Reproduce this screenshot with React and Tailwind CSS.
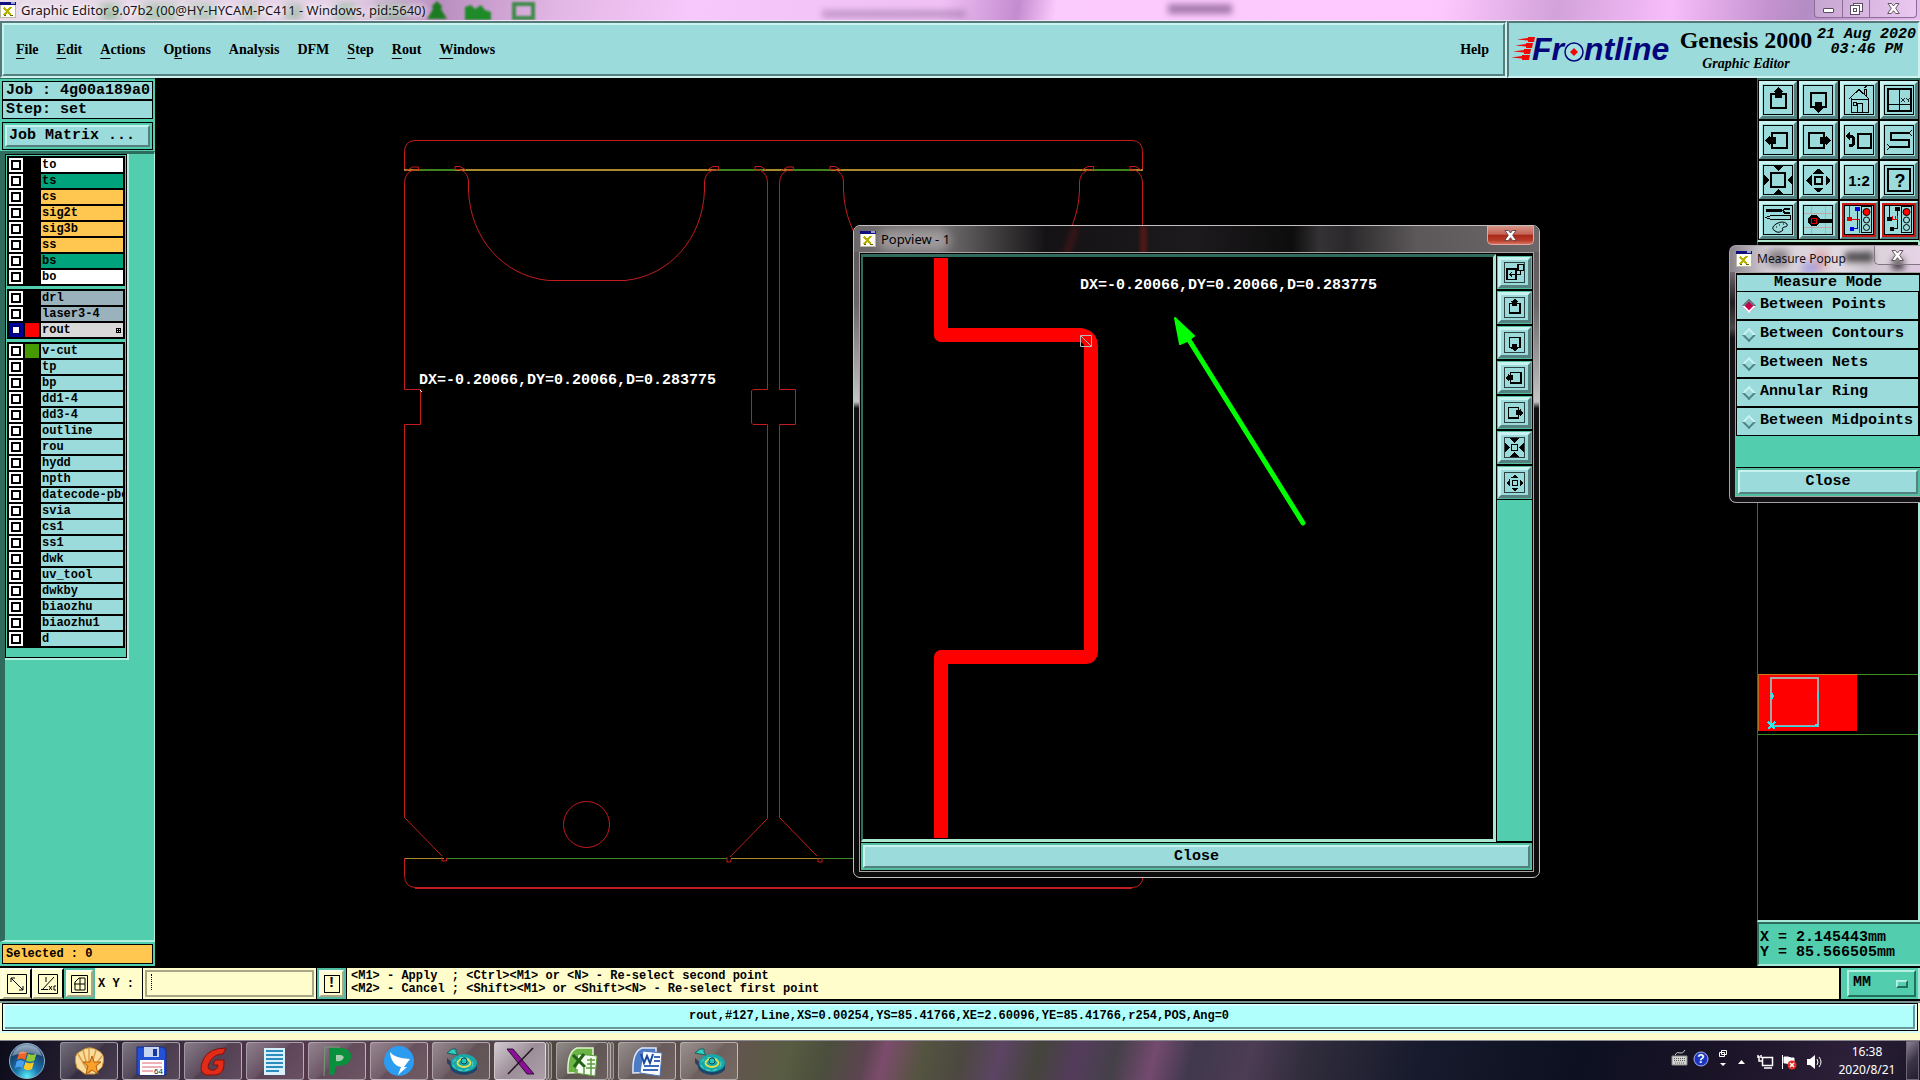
import React from "react";

const MONO = "font-['Liberation_Mono',monospace] font-bold";
const SERIF = "font-['Liberation_Serif',serif] font-bold";
const UI = "font-['Noto_Sans',sans-serif]";
const RAISED =
  "border-t-[#c9f3f1] border-l-[#c9f3f1] border-r-[#548080] border-b-[#548080]";
const SUNKEN =
  "border-t-[#557878] border-l-[#557878] border-r-[#cdf2f0] border-b-[#cdf2f0]";

/* ---------- title bar ---------- */

function AppIcon() {
  return (
    <svg width="16" height="16" viewBox="0 0 16 16" shapeRendering="crispEdges" className="shrink-0">
      <rect width="16" height="16" fill="#b8b8b0" />
      <rect x="1" y="1" width="14" height="14" fill="#fffff4" />
      <rect width="16" height="3" fill="#10107c" />
      <rect x="11" width="4" height="2" fill="#9aa0d8" />
      <path d="M4 6L11 13M11 5L4 13" stroke="#b8b000" strokeWidth="2" />
      <path d="M4 13H6M10 13H13" stroke="#606000" />
    </svg>
  );
}

const BLURS = [
  "left-[100px] w-5 bg-[#2c8c3c]/50",
  "left-[142px] w-9 bg-[#2c8c3c]/45",
  "left-[188px] w-7 bg-[#3c9c4c]/40",
  "left-[242px] w-4 bg-[#2c8c3c]/40",
  "left-[285px] w-4 bg-[#2c8c3c]/40",
  "left-[335px] w-5 bg-[#2c8c3c]/50",
  "left-[376px] w-8 bg-[#3c9c4c]/45",
];

function TitleBar() {
  return (
    <header className="relative flex h-[21px] shrink-0 items-center overflow-hidden border-b border-[#f4e4f6] bg-[linear-gradient(100deg,#e9dcea_0%,#e6d2e8_18%,#b98fc0_23%,#e2b6e4_29%,#f6c8fb_36%,#f0c0f4_49%,#c48cd0_53%,#fccbfd_55%,#fdc8fe_75%,#d3a2da_81%,#f7bdfb_87%,#c493cf_92%,#b48cc4_94%,#e8bdf0_100%)]">
      {BLURS.map((b) => (
        <span key={b} className={"absolute top-[5px] h-3.5 blur-[4px] " + b} />
      ))}
      <svg className="absolute left-[424px] top-0 blur-[1px]" width="116" height="21" viewBox="0 0 116 21">
        <path d="M13 1L18 6L17 9L23 19H3L9 9L8 6Z" fill="#1c7a20" />
        <path d="M41 20V7L47 5L51 9L57 5L61 10L67 12V20Z" fill="#1f8a28" />
        <path d="M90 4H109V18H90Z" fill="none" stroke="#3d8a48" strokeWidth="4" />
      </svg>
      <span className="absolute left-[822px] top-[10px] h-2 w-36 bg-[#8a6496]/45 blur-[3px]" />
      <span className="absolute left-[1168px] top-[4px] h-2.5 w-16 bg-[#6c4478]/60 blur-[3px]" />
      <div className="relative flex items-center gap-[5px]">
        <AppIcon />
        <h1 className={UI + " text-[13px] leading-none text-[#1c141c] [text-shadow:0_0_6px_#fff,0_0_6px_#fff]"}>
          Graphic Editor 9.07b2 (00@HY-HYCAM-PC411 - Windows, pid:5640)
        </h1>
      </div>
      <div className="absolute right-[3px] top-0 flex h-[18px] overflow-hidden rounded-b border border-t-0 border-[#8d6c96] bg-white/20">
        <button aria-label="Minimize" className="grid w-7 place-items-center border-r border-[#8d6c96]">
          <span className="mt-1 h-[5px] w-[11px] rounded-[1px] border border-[#5c4c64] bg-white" />
        </button>
        <button aria-label="Restore" className="grid w-[27px] place-items-center border-r border-[#8d6c96]">
          <svg width="13" height="12" viewBox="0 0 13 12" fill="#fff" stroke="#5c4c64">
            <rect x="3.5" y=".5" width="9" height="8" />
            <rect x=".5" y="2.5" width="9" height="9" />
            <rect x="3.5" y="5.5" width="3" height="3" />
          </svg>
        </button>
        <button aria-label="Close" className="grid w-[46px] place-items-center">
          <CloseX />
        </button>
      </div>
    </header>
  );
}

function CloseX() {
  return (
    <svg width="13" height="11" viewBox="0 0 13 11">
      <path d="M1 .5H4.5L6.5 3L8.5.5H12L8.7 5.2L12.300 10.500H8.700L6.500 7.700L4.300 10.500H.7L4.300 5.200Z" fill="#fff" stroke="#55454f" strokeWidth=".9" />
    </svg>
  );
}

/* ---------- menu ---------- */

const MENU = [
  ["", "F", "ile"],
  ["", "E", "dit"],
  ["", "A", "ctions"],
  ["O", "p", "tions"],
  ["Analysis", "", ""],
  ["DFM", "", ""],
  ["", "S", "tep"],
  ["", "R", "out"],
  ["", "W", "indows"],
];

function Logo() {
  return (
    <svg width="164" height="48" viewBox="0 -8 164 48" role="img" aria-label="Frontline" className="shrink-0">
      <g fill="#f00808">
        <path d="M6 5.500L17 4V3H24L23 8H17V6.500Z" />
        <path d="M4 11.500L15 10V9H22L21 14H15V12.500Z" />
        <path d="M2 17.500L13 16V15H20L19 20H13V18.500Z" />
        <path d="M0 23.500L11 22V21H19L18 26H11V24.500Z" />
      </g>
      <g fill="#06067c" className="font-['Liberation_Sans',sans-serif] text-[32px] font-bold italic">
        <text x="21" y="26">Fr</text>
        <text x="73" y="26">ntline</text>
      </g>
      <circle cx="63" cy="18" r="9" fill="#a4e2e2" stroke="#06067c" strokeWidth="1.500" />
      <path d="M63 14L67 18L63 22L59 18Z" fill="#f00808" />
    </svg>
  );
}

function MenuBar() {
  return (
    <div className="flex h-[57px] shrink-0 bg-[#9bdbdb]">
      <div className={"flex flex-1 border-2 " + SUNKEN}>
        <nav className={SERIF + " flex flex-1 items-center gap-[18px] border-2 pl-3 pr-3.5 text-[14px] " + RAISED}>
          {MENU.map(([a, u, b]) => (
            <button key={a + u + b}>
              {a}
              {u && <span className="underline underline-offset-4">{u}</span>}
              {b}
            </button>
          ))}
          <button className="ml-auto">Help</button>
        </nav>
      </div>
      <div className={"flex w-[413px] items-center border-2 pl-0.5 " + SUNKEN}>
        <Logo />
        <div className={SERIF + " flex flex-1 flex-col items-center"}>
          <span className="text-[24px] leading-7">Genesis 2000</span>
          <span className="text-[14px] italic leading-5">Graphic Editor</span>
        </div>
        <div className={MONO + " self-start pr-0.5 pt-1 text-center text-[15px] italic leading-[15px]"}>
          <div>21 Aug 2020</div>
          <div>03:46 PM</div>
        </div>
      </div>
    </div>
  );
}

/* ---------- layer list ---------- */

const W = "bg-white";
const G = "bg-[#00a47c]";
const O = "bg-[#ffc650]";
const S = "bg-[#9ab2bc]";
const C = "bg-[#9bdbdb]";
const GROUPS = [
  [["to", W], ["ts", G], ["cs", O], ["sig2t", O], ["sig3b", O], ["ss", O], ["bs", G], ["bo", W]],
  [["drl", S], ["laser3-4", S], ["rout", "bg-[#d9d9d9]", "bg-[#ff0000]"]],
  [
    ["v-cut", C, "bg-[#459a00]"], ["tp", C], ["bp", C], ["dd1-4", C], ["dd3-4", C], ["outline", C],
    ["rou", C], ["hydd", C], ["npth", C], ["datecode-pbo", C], ["svia", C], ["cs1", C], ["ss1", C],
    ["dwk", C], ["uv_tool", C], ["dwkby", C], ["biaozhu", C], ["biaozhu1", C], ["d", C],
  ],
];

function LayerRow({ name, bg, swatch }) {
  const active = name === "rout";
  return (
    <label className="flex h-3.5 gap-0.5">
      <input
        type="checkbox"
        className={
          "size-3.5 shrink-0 appearance-none border-2 bg-white " +
          (active
            ? "border-[#00009c] shadow-[inset_0_0_0_2px_#000080]"
            : "border-white shadow-[inset_0_0_0_2px_#000]")
        }
      />
      <span className={"size-3.5 shrink-0 " + (swatch || "bg-black")} />
      <span className={"flex min-w-0 flex-1 items-center overflow-hidden whitespace-nowrap pl-px text-[12px] leading-[14px] " + bg}>
        {name}
        {active && (
          <svg className="ml-auto mr-0.5" width="5" height="5" viewBox="0 0 5 5" shapeRendering="crispEdges">
            <path d="M.5.5H4.500V4.500H.5ZM2.500 0V5M0 2.500H5" fill="none" stroke="#000" />
          </svg>
        )}
      </span>
    </label>
  );
}

function LeftPanel() {
  return (
    <aside className={MONO + " flex w-[155px] shrink-0 flex-col bg-[#52ceae] text-black"}>
      <div className="border-t border-[#2c6c5c] px-0.5 pt-0.5 text-[15px]">
        <div className="border border-black bg-[#9bdbdb] pl-[3px] leading-[17px]">Job : 4g00a189a0</div>
        <div className="border border-black bg-[#9bdbdb] pl-[3px] leading-[17px]">Step: set</div>
        <div className="mt-[3px] border border-black p-0.5">
          <button className={"block w-full border-2 bg-[#9bdbdb] pl-0.5 text-left leading-[18px] " + RAISED}>
            Job Matrix ...
          </button>
        </div>
      </div>
      <div className="mt-px flex flex-1 flex-col items-start border-b-2 border-l-[5px] border-r border-t-[3px] border-b-[#b4f0e0] border-l-[#2f6c5e] border-r-[#b4f0e0] border-t-[#2f6c5e]">
        <div className="w-[124px] border-b-2 border-r-2 border-[#b4f0e0]">
          <div className="flex flex-col gap-[3px] border border-black px-px pb-[9px] pt-px">
            {GROUPS.map((rows, i) => (
              <div key={i} className="flex flex-col gap-0.5 bg-black p-0.5">
                {rows.map(([name, bg, swatch]) => (
                  <LayerRow key={name} name={name} bg={bg} swatch={swatch} />
                ))}
              </div>
            ))}
          </div>
        </div>
      </div>
      <div className="px-0.5 pb-0.5 pt-0.5">
        <div className="border border-black bg-[#ffc650] pl-[3px] text-[12px] leading-[18px]">Selected : 0</div>
      </div>
    </aside>
  );
}

/* ---------- toolbar glyphs, drawn on a 30 x 30 grid ---------- */

const GLYPHS = {
  up: (
    <>
      <rect x="8" y="9" width="15" height="14" fill="none" strokeWidth="2" />
      <path d="M15.500 2L21 7H19V13H12V7H10Z" stroke="none" />
    </>
  ),
  down: (
    <>
      <rect x="8" y="8" width="15" height="14" fill="none" strokeWidth="2" />
      <path d="M15.500 28L21 23H19V17H12V23H10Z" stroke="none" />
    </>
  ),
  left: (
    <>
      <rect x="9" y="8" width="15" height="15" fill="none" strokeWidth="2" />
      <path d="M2 15.500L7 10V12H13V19H7V21Z" stroke="none" />
    </>
  ),
  right: (
    <>
      <rect x="6" y="8" width="15" height="15" fill="none" strokeWidth="2" />
      <path d="M28 15.500L23 10V12H17V19H23V21Z" stroke="none" />
    </>
  ),
  home: (
    <path d="M5 14L15 4.500L25 14M7 13V27H24V13M7 14H24M13.500 27V18H18.500V27M20 9V4.500H22V11M9 17H12V20H9ZM20 3L23 1" fill="none" />
  ),
  grid: (
    <>
      <rect x="4" y="4" width="23" height="22" fill="none" strokeWidth="2" />
      <path d="M15.500 4V26M4 19.500H27" fill="none" />
      <path d="M17 13L21 17M21 13L17 17M22 13L24 15L26 13M24 15V17" fill="none" strokeWidth=".8" />
    </>
  ),
  undo: (
    <>
      <rect x="14" y="9" width="13" height="14" fill="none" strokeWidth="2" />
      <path d="M6 11H8Q10 13 10 16Q10 21 5 21" fill="none" strokeWidth="3" />
      <path d="M1 11L6 7V15Z" stroke="none" />
    </>
  ),
  snake: (
    <>
      <path d="M25 8H7V15H25V22H6" fill="none" strokeWidth="2" />
      <path d="M25 8L28 5M25 8L28 11M6 22L3 19M6 22L3 25" fill="none" />
    </>
  ),
  out: (
    <>
      <rect x="8" y="8" width="14" height="14" fill="none" strokeWidth="2" />
      <path d="M10 1H20L15 6ZM10 29H20L15 24ZM1 10V20L6 15ZM29 10V20L24 15Z" stroke="none" />
    </>
  ),
  outSmall: (
    <>
      <rect x="11" y="11" width="8" height="8" fill="none" strokeWidth="2" />
      <path d="M8 1H22L15 9ZM8 29H22L15 21ZM1 8V22L9 15ZM29 8V22L21 15Z" stroke="none" />
    </>
  ),
  in: (
    <>
      <rect x="12" y="12" width="7" height="7" fill="none" strokeWidth="2" />
      <path d="M10 8.500H21L15.500 3.500ZM10 22.500H21L15.500 27.500ZM8.500 10V21L3.500 15.500ZM22.500 10V21L27.500 15.500Z" stroke="none" />
    </>
  ),
  ratio: (
    <text x="15" y="21" textAnchor="middle" stroke="none" className="font-['Liberation_Sans',sans-serif] text-[15px] font-bold">
      1:2
    </text>
  ),
  help: (
    <>
      <rect x="4" y="4" width="22" height="22" fill="none" strokeWidth="2" />
      <text x="16" y="22" textAnchor="middle" stroke="none" className="font-['Liberation_Sans',sans-serif] text-[18px] font-bold">
        ?
      </text>
    </>
  ),
  tools: (
    <>
      <path d="M3 5.500H19" strokeWidth="3" />
      <path d="M27 3.500H22L20 5.500L22 8H27" fill="none" strokeWidth="2" />
      <path d="M3 12.500L8 10.500H27V14.500H8Z" fill="none" />
      <path d="M12 26Q7 23 13 19Q20 15 24 19Q25 22 21 22Q18 23 20 25Q16 29 12 26ZM13 22H14M16 20H17M20 19H21" fill="none" shapeRendering="auto" />
    </>
  ),
  probe: (
    <>
      <path d="M8.500 1V29M22.500 1V29M1 8.500H29M1 22.500H29" stroke="#c2a9a4" fill="none" />
      <circle cx="11" cy="15.500" r="6" stroke="none" />
      <path d="M15 15.500H29" strokeWidth="4" />
      <path d="M8.500 13H13.500V18H8.500ZM10.500 15.500H11.500" fill="none" stroke="#e00000" />
    </>
  ),
  netOn: (
    <>
      <path d="M5.500 1V14M5.500 14H15.500V28" stroke="#e00000" fill="none" />
      <path d="M13.500 4V23H8" stroke="#0000e0" fill="none" />
      <circle cx="13.500" cy="4" r="2.500" fill="#0000e0" stroke="none" />
      <circle cx="5.500" cy="14" r="2.500" fill="#e00000" stroke="none" />
      <circle cx="8" cy="24" r="2.500" fill="#0000e0" stroke="none" />
    </>
  ),
  netOff: (
    <>
      <path d="M5.500 1V14M13.500 4V23H8" fill="none" />
      <path d="M7 14H14M8.500 11V14M11 11V14M13.500 11V14" stroke="#e00000" fill="none" />
      <circle cx="13.500" cy="4" r="2.500" stroke="none" />
      <circle cx="5.500" cy="14" r="2.500" stroke="none" />
      <circle cx="8" cy="24" r="2.500" stroke="none" />
    </>
  ),
  copyView: (
    <>
      <rect x="4" y="10" width="13" height="15" fill="none" strokeWidth="2" />
      <rect x="20" y="3" width="8" height="9" fill="none" strokeWidth="1.500" />
      <path d="M8 17.500H24V12M8 17.500L11 14.500M8 17.500L11 20.500" fill="none" strokeWidth="1.500" />
    </>
  ),
};

function Glyph({ name, className }) {
  return (
    <svg viewBox="0 0 30 30" className={className} fill="#000" stroke="#000" shapeRendering="crispEdges">
      {GLYPHS[name]}
      {name.startsWith("net") && (
        <g shapeRendering="auto" fill="none">
          <rect x="17.500" y="1.500" width="10" height="26" />
          <circle cx="22.500" cy="7" r="3.500" fill="#ff0000" />
          <circle cx="22.500" cy="15" r="3" />
          <circle cx="22.500" cy="22.500" r="3" />
        </g>
      )}
      <rect x=".5" y=".5" width="29" height="29" fill="none" />
    </svg>
  );
}

const TOOLS = [
  "up", "down", "home", "grid",
  "left", "right", "undo", "snake",
  "out", "in", "ratio", "help",
  "tools", "probe", "netOn", "netOff",
];

function Overview() {
  return (
    <div className="flex-1 border-b-2 border-l border-r-2 border-b-[#a8e8d8] border-l-[#2f6c5e] border-r-[#a8e8d8] bg-black pt-[432px]">
      <svg className="block w-full" height="63" shapeRendering="crispEdges">
        <rect x="0" y="1" width="99" height="56" fill="#f00" />
        <path d="M0 .5H99" stroke="#c87818" />
        <path d="M99 .5H200M0 60.500H200" stroke="#3e8a1c" />
        <path d="M.5 0V57" stroke="#b07020" />
        <rect x="13" y="4" width="47" height="48" fill="none" stroke="#a8a8a8" strokeWidth="2" />
        <path d="M13 4V52H59M60 18V26" fill="none" stroke="#20dce8" />
        <path d="M10 48L17 55M17 48L10 55M13 19L15 22L13 25M57 51H60" fill="none" stroke="#20f0f8" strokeWidth="2" />
      </svg>
    </div>
  );
}

function RightPanel() {
  return (
    <aside className="flex w-[163px] shrink-0 flex-col">
      <div className="border-b-2 border-l border-r border-t-2 border-b-[#a8e8c8] border-l-[#2f6c5e] border-r-[#2f6c5e] border-t-[#2f6c5e] bg-black">
        <div className="grid grid-cols-4 gap-0.5 p-px">
          {TOOLS.map((t) => (
            <button
              key={t}
              aria-label={t}
              className={"grid h-[38px] place-items-center border-[3px] bg-[#9bdbdb] " + RAISED}
            >
              <Glyph
                name={t}
                className={"size-[30px] " + (t.startsWith("net") ? "outline-2 outline-[#c81818]" : "")}
              />
            </button>
          ))}
        </div>
      </div>
      <Overview />
      <div className={MONO + " border-b-2 border-l-2 border-t-2 border-b-[#a8e8d8] border-l-[#2f6c5e] border-t-[#2f6c5e] bg-[#52ceae] pb-1 pl-px pt-1.5 text-[15px] leading-[15px]"}>
        <div>X = 2.145443mm</div>
        <div>Y = 85.566505mm</div>
      </div>
    </aside>
  );
}

/* ---------- board drawing ---------- */

function Board() {
  return (
    <svg className="block h-full w-full" aria-label="Board outline">
      <g transform="translate(-155 -78)" fill="none" stroke="#c41c1c">
        <path d="M404.500 169V152Q404.500 140.500 416 140.500H1132Q1142.500 140.500 1142.500 152V169" />
        <path d="M404 170H1143" stroke="#a88a28" strokeWidth="2" />
        <path d="M419 170H455M716 170H763M793 170H831M1094 170H1130" stroke="#3f8420" strokeWidth="2" />
        <defs>
          <path
            id="card"
            d="M418.500 170V167H412.500L406 171M418.500 170H413Q404.500 173 404.500 184V389.500H420.500V424.500H404.500V817.500L442 856M455 166.500H460L466 170M455 166.500V169.500H460Q468.500 173 468.500 182V190C470 238 503 276 548.500 280.500H625C670 276 703 238 704.500 190V182Q705 173 713 170H718.500V166.500H713L707 170M755 170V166.500H761L766 170M755 170H760Q767.500 174 767.500 183V389.500H753L751.500 391V423L753 424.500H767.500V818.500L730 857"
          />
        </defs>
        <use href="#card" />
        <use href="#card" x="375" />
        <circle cx="586.500" cy="824.500" r="23" />
        <path d="M404 858.500H444M731 858.500H820" stroke="#a88a28" />
        <path d="M446 858.500H727M820 858.500H860" stroke="#3f8420" />
        <path d="M442 857V861H446.500V858M727 857V862H731V859M818 858V862H822V858" />
        <path d="M404.500 858V875Q404.500 887.500 416 887.500H1132Q1142.500 887.500 1143 876" />
        <path d="M415 888H1132" strokeWidth="2" />
        <text x="419" y="384" fill="#fff" stroke="none" className={MONO + " text-[15px]"}>
          DX=-0.20066,DY=0.20066,D=0.283775
        </text>
        <path d="M420 390L422 392" stroke="#fff" />
      </g>
    </svg>
  );
}

/* ---------- popview window ---------- */

function Popview() {
  return (
    <section className="absolute left-[698px] top-[147px] flex h-[653px] w-[687px] flex-col rounded-[7px] border border-[#c4c0c2] bg-[linear-gradient(180deg,#5a5557_0%,#6a6668_12%,#c4c4c4_27%,#101010_28%,#0c0c0c_100%)] px-[5px] pb-[5px]">
      <div className="relative -mx-[5px] flex h-[26px] shrink-0 items-center gap-[5px] overflow-hidden rounded-t-[6px] bg-[linear-gradient(90deg,#6c686a_0%,#787476_12%,#454244_20%,#141214_28%,#1c1a1c_50%,#0e0d0e_64%,#343234_68%,#2a282a_72%,#5c585a_82%,#6c686a_100%)] pl-1.5">
        <span className="absolute left-[214px] top-0 h-8 w-[5px] rotate-[20deg] bg-[#981818]/40 blur-[3px]" />
        <span className="absolute left-[287px] top-0 h-7 w-[5px] bg-[#981818]/60 blur-[2px]" />
        <span className="absolute left-6 top-1 h-5 w-[72px] rounded-full bg-[#b0acae]/70 blur-[5px]" />
        <AppIcon />
        <h2 className={UI + " relative text-[13px] leading-none text-black"}>Popview - 1</h2>
        <button
          aria-label="Close window"
          className="absolute right-[5px] top-0 grid h-[19px] w-[47px] place-items-center rounded-b-[5px] border border-t-0 border-[#e0a8a0] bg-[linear-gradient(180deg,#d89488_0%,#c46456_45%,#a82818_52%,#b83c28_80%,#d87060_100%)]"
        >
          <CloseX />
        </button>
      </div>
      <div className="flex min-h-0 flex-1 flex-col border border-[#a8a4a6] bg-black p-px">
        <div className="flex min-h-0 flex-1">
          <div className="min-w-0 flex-1 border-b-[3px] border-l-2 border-r-[3px] border-t-[3px] border-b-[#a8e8d0] border-l-[#2f6c5e] border-r-[#a8e8d0] border-t-[#2f6c5e] bg-black">
            <svg className="block h-full w-full" aria-label="Magnified view">
              <g transform="translate(-863 -257)">
                <path d="M941 258V335H1081Q1091 337 1091 347V651Q1091 657 1085 657H941V838" fill="none" stroke="#f00" strokeWidth="14" strokeLinejoin="round" />
                <path d="M1080.500 335.500H1091.500V346.500H1080.500ZM1081 336L1091 346" fill="none" stroke="#b8b8b8" />
                <path d="M1189 340L1303 523" stroke="#0f0" strokeWidth="5" strokeLinecap="round" />
                <path d="M1175 318L1194 336L1187 341L1180 344Z" fill="#0f0" stroke="#0f0" strokeWidth="2" strokeLinejoin="round" />
                <text x="1080" y="289" fill="#fff" className={MONO + " text-[15px]"}>
                  DX=-0.20066,DY=0.20066,D=0.283775
                </text>
              </g>
            </svg>
          </div>
          <div className="ml-px flex w-[35px] flex-col gap-0.5 pb-px pt-0.5">
            {["copyView", "up", "down", "left", "right", "outSmall", "in"].map((t) => (
              <div key={t} className="bg-[#52bea0] p-px">
                <button
                  aria-label={"Popview " + t}
                  className={"grid h-[31px] w-full place-items-center border-[3px] bg-[#9bdbdb] " + RAISED}
                >
                  <Glyph name={t} className="size-[21px]" />
                </button>
              </div>
            ))}
            <div className="-mt-px flex-1 bg-[#52ceae]" />
          </div>
        </div>
        <div className="mt-px bg-[#52bea0] p-0.5">
          <button className={MONO + " block w-full border-2 bg-[#9bdbdb] pt-px text-[15px] leading-[18px] " + RAISED}>
            Close
          </button>
        </div>
      </div>
    </section>
  );
}

/* ---------- measure window ---------- */

const MODES = ["Between Points", "Between Contours", "Between Nets", "Annular Ring", "Between Midpoints"];

function MeasurePopup() {
  return (
    <section className="absolute right-0 top-[167px] flex w-[191px] flex-col rounded-tl-[7px] rounded-bl-[7px] border border-r-0 border-[#a8a4a6] bg-[linear-gradient(180deg,#b4a8b4_0%,#201c20_22%,#4a464a_32%,#141214_36%,#141214_100%)] pb-[5px] pl-[5px]">
      <div className="relative -ml-[5px] flex h-[26px] items-center gap-[5px] overflow-hidden rounded-tl-[6px] bg-[linear-gradient(90deg,#8c848c_0%,#d8d0d8_20%,#e2dae2_60%,#cfc7cf_72%,#e0c8e0_100%)] pl-[6px]">
        <span className="absolute left-[38px] top-1 h-4 w-5 bg-[#303030]/50 blur-[4px]" />
        <span className="absolute left-[85px] top-1 h-5 w-3 bg-[#e04040]/30 blur-[4px]" />
        <span className="absolute left-[72px] top-4 h-3 w-4 bg-[#4040e0]/35 blur-[4px]" />
        <span className="absolute left-[115px] top-1.5 h-2.5 w-7 bg-[#181818]/70 blur-[3px]" />
        <span className="absolute right-4 top-3 h-3 w-3 bg-[#181818]/75 blur-[3px]" />
        <AppIcon />
        <h2 className={UI + " relative text-[12px] leading-none text-[#141014]"}>Measure Popup</h2>
        <button aria-label="Close measure popup" className="absolute right-0 top-0 grid h-[19px] w-[46px] place-items-center rounded-bl-[5px] border border-r-0 border-t-0 border-[#807480] bg-white/20">
          <CloseX />
        </button>
      </div>
      <div className={MONO + " flex flex-col border border-r-0 border-[#a8a4a6] bg-black text-[15px]"}>
        <fieldset className="contents">
          <legend className="contents">
            <span className="mt-0.5 mr-px ml-px block bg-[#9bdbdb] text-center leading-4">Measure Mode</span>
          </legend>
          {MODES.map((m, i) => (
            <label key={m} className="ml-px mr-0.5 mt-px mb-px flex h-[27px] items-center gap-[6px] bg-[#9bdbdb] pl-[7px]">
              <input
                type="radio"
                name="mode"
                defaultChecked={i === 0}
                className="size-2.5 shrink-0 rotate-45 appearance-none border-2 border-b-[#4f8484] border-l-[#c9f3f1] border-r-[#4f8484] border-t-[#c9f3f1] checked:border-b-white checked:border-l-[#5c8080] checked:border-r-white checked:border-t-[#5c8080] checked:bg-[#c8004c]"
              />
              <span className="whitespace-nowrap">{m}</span>
            </label>
          ))}
        </fieldset>
        <div className="h-[31px] bg-[#52ceae]" />
        <div className="mt-px bg-[#52bea0] p-0.5">
          <button className={"block w-full border-2 bg-[#9bdbdb] leading-5 " + RAISED}>Close</button>
        </div>
      </div>
    </section>
  );
}

/* ---------- command and status bars ---------- */

function CommandBar() {
  const btn =
    "grid h-full place-items-center border-2 border-t-[#fffff0] border-l-[#fffff0] border-r-[#a8a888] border-b-[#a8a888] bg-[#fffdcc]";
  return (
    <div className={MONO + " flex h-[35px] shrink-0 border-y-2 border-black bg-[#fffdcc] text-[12px]"}>
      <button aria-label="Resize" className={btn + " ml-0.5 w-[30px] border-r-black"}>
        <svg width="20" height="20" fill="none" stroke="#000">
          <path d="M.5.5H19.500V19.500H.5ZM4 4L16 16M4 8V4H8M12 16H16V12" />
        </svg>
      </button>
      <button aria-label="Angle" className={btn + " w-8 border-r-black"}>
        <svg width="20" height="20" fill="none" stroke="#000">
          <path d="M.5.5H19.500V19.500H.5ZM4 16L16 3M3 15.500H10M8 3V8M11 12L14 16M14 12L11 16M18 12H16V16H18" />
        </svg>
      </button>
      <div className="w-[31px] bg-[#52bea0] p-0.5">
        <button aria-label="Grid" className={btn + " w-full"}>
          <svg width="17" height="18" fill="none" stroke="#000">
            <path d="M.5.5H16.500V17.500H.5ZM4 15V7L8 3H14V15ZM3 9H14M9 3V15" />
          </svg>
        </button>
      </div>
      <label htmlFor="xy" className="flex w-[47px] items-center whitespace-pre pl-[3px]">X Y :</label>
      <div className="relative w-[174px] border-l border-black p-0.5">
        <input
          id="xy"
          className="h-full w-full border-2 border-b-[#a8a888] border-l-[#a8a888] border-r-[#a8a888] border-t-[#a8a888] bg-[#fffdcc] px-1 outline-none"
        />
        <span className="pointer-events-none absolute left-2 top-1.5 h-4 border-l border-dotted border-black" />
      </div>
      <div className="w-[31px] border-x border-black bg-[#52bea0] p-0.5">
        <button aria-label="Alert" className={btn + " w-full"}>
          <span className="grid h-[18px] w-4 place-items-center border border-black text-[15px] leading-none">!</span>
        </button>
      </div>
      <pre className={MONO + " flex-1 pl-1 pt-0.5 leading-[13px]"}>
        {"<M1> - Apply  ; <Ctrl><M1> or <N> - Re-select second point\n<M2> - Cancel ; <Shift><M1> or <Shift><N> - Re-select first point"}
      </pre>
      <div className="flex w-[81px] border-l-2 border-r-2 border-l-black border-r-[#a8e8d8] bg-[#52ceae] py-0.5 pl-1.5 pr-0.5">
        <label className="relative flex flex-1 border-2 border-b-[#20705c] border-l-[#b4f0e0] border-r-[#20705c] border-t-[#b4f0e0]">
          <span className="sr-only">Units</span>
          <select className="w-full appearance-none bg-transparent pl-1 text-[15px] outline-none">
            <option>MM</option>
            <option>INCH</option>
          </select>
          <span className="pointer-events-none absolute right-1.5 top-2 h-2 w-3 border-2 border-b-[#20705c] border-l-[#b4f0e0] border-r-[#20705c] border-t-[#b4f0e0]" />
        </label>
      </div>
    </div>
  );
}

function StatusBar() {
  return (
    <div className="h-[39px] shrink-0 border-t-2 border-[#7c9494] bg-[#fffdcc]">
      <div className="border-b-2 border-[#d8fcfc] pl-0.5 pr-0.5">
        <div className="border border-black bg-[#d8fffd] px-0.5 pb-px">
          <output className={MONO + " block border-b-2 border-r-2 border-t-2 border-b-[#669898] border-r-[#669898] border-t-[#d8fffd] bg-[#b0fffc] text-center text-[12px] leading-[21px]"}>
            rout,#127,Line,XS=0.00254,YS=85.41766,XE=2.60096,YE=85.41766,r254,POS,Ang=0
          </output>
        </div>
      </div>
    </div>
  );
}

/* ---------- taskbar ---------- */

function StartOrb() {
  return (
    <svg width="38" height="38" viewBox="0 0 38 38">
      <defs>
        <radialGradient id="orb" cx=".5" cy=".95" r=".95">
          <stop offset="0" stopColor="#5cf0f8" />
          <stop offset=".35" stopColor="#1c78b0" />
          <stop offset=".75" stopColor="#17406c" />
          <stop offset="1" stopColor="#7c98b4" />
        </radialGradient>
      </defs>
      <circle cx="19" cy="19" r="17.500" fill="url(#orb)" stroke="#8cb4cc" />
      <path d="M11 11Q15 8 19 11L17 18Q13 15 9 18Z" fill="#f06428" />
      <path d="M20 11.500Q24 14 28.500 11.500L26.500 18.500Q22 21 18 18.500Z" fill="#90c83c" />
      <path d="M8.500 19.500Q12 16.500 16.500 19.500L14.500 26Q11 23.500 7 26Z" fill="#48a0f0" />
      <path d="M17.500 20Q22 22.500 26 20L24 27Q20 29.500 15.500 26.500Z" fill="#fcc828" />
      <path d="M4 14Q8 3 19 3Q30 3 34 14Q19 8 4 14Z" fill="#fff" opacity=".35" />
    </svg>
  );
}

const DISC = (
  <>
    <path d="M1 12L9 19L11 23L8 24L1 17Z" fill="#30405c" />
    <ellipse cx="18" cy="20" rx="14" ry="9" fill="#1c4468" />
    <ellipse cx="18" cy="17" rx="13" ry="9" fill="#18a8a8" />
    <ellipse cx="17" cy="18" rx="10" ry="6.500" fill="none" stroke="#60d8d0" strokeDasharray="4 3" />
    <ellipse cx="18" cy="17" rx="6.500" ry="4" fill="none" stroke="#e8e050" strokeWidth="1.800" />
    <ellipse cx="18" cy="15" rx="3" ry="3" fill="#20c8c0" stroke="#104858" />
    <path d="M1 7L6 3H10V6L12 9L6 8Z" fill="#30d0c0" stroke="#106060" />
  </>
);

const APPS = [
  ["Shell", (
    <>
      <path d="M3 22Q-2 8 7 5Q15 -1 23 4Q33 8 28 21L21 28H11Z" fill="#f8dc9c" stroke="#c88c30" />
      <path d="M15 27L4 8M15 27L9 4M15 27L15 2M15 27L22 4M15 27L28 10" stroke="#dca048" strokeWidth="1.500" fill="none" />
      <path d="M18 10L20 16L27 16L22 20L24 28L18 24L12 28L14 20L9 16L16 16Z" fill="#f8a028" stroke="#b85c10" />
    </>
  )],
  ["Save", (
    <>
      <path d="M1 1H27L30 4V29H1Z" fill="#2450d8" stroke="#102c8c" />
      <rect x="8" y="1" width="15" height="10" fill="#c8d4f0" />
      <rect x="17" y="3" width="4" height="7" fill="#1838a0" />
      <rect x="4" y="14" width="24" height="15" fill="#fff" />
      <path d="M6 17H26M6 21H26M6 25H17" stroke="#e06070" />
      <text x="18" y="28" fill="#222" className="font-['Liberation_Sans',sans-serif] text-[8px]">64</text>
    </>
  )],
  ["G", (
    <path d="M28 2Q12 2 6 12Q-1 26 8 29H18Q27 28 26 14H17L15 19H20Q19 25 13 24Q7 22 13 14Q17 8 25 8Z" fill="#e02c18" stroke="#841008" />
  )],
  ["Notes", (
    <>
      <path d="M4 2H25V29H4Z" fill="#d8f0fc" />
      <path d="M6 5H23M6 9H23M6 13H23M6 17H23M6 21H23M6 25H19" stroke="#2c8cbc" strokeWidth="2" />
    </>
  )],
  ["P", (
    <>
      <path d="M2 30L3 1H18" fill="none" stroke="#70a070" />
      <path d="M7 29V2H21Q30 4 29 12Q27 20 16 20H14L12 29Z" fill="#08903c" />
      <path d="M14 15V9H19Q23 10 21 13Q19 16 14 15Z" fill="#a8ccb0" />
    </>
  )],
  ["Bird", (
    <>
      <circle cx="15" cy="15" r="15" fill="#2c9cf0" />
      <path d="M6 6Q10 12 26 13L20 21H23L14 29L17 21Q11 20 8 14Q6 10 6 6Z" fill="#fff" />
    </>
  )],
  ["Disc", DISC],
  ["X", (
    <>
      <path d="M2 3H8L29 28H22Z" fill="#8c1098" stroke="#301038" />
      <path d="M28 2L3 28" stroke="#201420" strokeWidth="1.500" />
    </>
  )],
  ["Sheets", (
    <>
      <path d="M1 27Q0 6 10 2H26V26Z" fill="#6cb444" stroke="#e0f4d0" strokeWidth="1.500" />
      <path d="M11 8L30 10L28 30L8 27Z" fill="#f4fcf0" stroke="#5c9c3c" />
      <path d="M20 14H28M20 18H28M19 22H28M10 23V27M17 22V28M24 12V29" stroke="#5c9c3c" strokeWidth="1.500" />
      <path d="M6 9L18 21M17 8L7 21" stroke="#206414" strokeWidth="3" />
    </>
  )],
  ["Words", (
    <>
      <path d="M1 27Q0 6 10 2H24V26Z" fill="#4c7cc8" stroke="#dce8fc" strokeWidth="1.500" />
      <path d="M11 5L30 7L28 30L8 27Z" fill="#f8fcff" stroke="#4c74b8" />
      <path d="M22 11H28M22 15H28M12 20H27M11 24H26" stroke="#3c68b8" strokeWidth="2" />
      <path d="M9 8L12 17L15 10L18 17L21 8" stroke="#1c48a0" strokeWidth="2" fill="none" />
    </>
  )],
  ["Disc two", DISC],
];

function Taskbar() {
  return (
    <footer className="flex h-10 shrink-0 items-stretch border-t border-[#8c8890] bg-[linear-gradient(105deg,#0c0c1a_0%,#241c30_4%,#3c2c40_9%,#52364c_15%,#5c4450_22%,#4c4440_28%,#5a4c4c_34%,#645450_38%,#585c42_41%,#4a4e3c_43%,#5c4450_45%,#7c4c6c_46%,#545440_48%,#4c4840_50%,#5c4464_52%,#44443c_54%,#543c5c_56%,#444048_58%,#744a70_60%,#40384c_62%,#4c3c54_65%,#302c3c_68%,#161a2c_74%,#0c1020_82%,#1c1428_90%,#2c2038_96%,#1c1628_100%)]">
      <button aria-label="Start" className="grid w-[60px] place-items-center pr-1.5">
        <StartOrb />
      </button>
      <div className="flex gap-1 pt-px">
        {APPS.map(([name, art], i) => {
          const stacked = i === 7 || i === 8;
          return (
            <div key={name} className="flex w-[58px]">
              <button
                aria-label={name}
                className={
                  "grid min-w-0 flex-1 place-items-center rounded-[3px] border border-white/45 " +
                  (i === 7
                    ? "bg-[linear-gradient(135deg,#f0e8f0d0_0%,#c0b0c0b0_50%,#d8c8d8b0_100%)]"
                    : "bg-[linear-gradient(135deg,#ffffff60_0%,#ffffff28_45%,#ffffff14_50%,#ffffff20_100%)]")
                }
              >
                <svg width="31" height="31" viewBox="0 0 31 31">{art}</svg>
              </button>
              {stacked && (
                <>
                  <span className="w-[3px] rounded-r border-y border-r border-white/45 bg-white/20" />
                  <span className="w-[3px] rounded-r border-y border-r border-white/35 bg-white/15" />
                </>
              )}
            </div>
          );
        })}
      </div>
      <div className="ml-auto flex items-center">
        <svg width="160" height="30" viewBox="0 0 160 30" aria-label="Tray" className="shrink-0">
          <path d="M2 10H17V19H2Z" fill="#d4d4d4" stroke="#888" />
          <path d="M4 12.500H15M4 14.500H15M5 17H14" stroke="#555" strokeDasharray="1 1" />
          <path d="M5 9Q7 5 10 7Q13 8 15 4" fill="none" stroke="#c8c8c8" />
          <circle cx="31" cy="13" r="7" fill="#1c34c0" stroke="#a8b4ec" />
          <text x="31" y="17" textAnchor="middle" fill="#fff" className="font-['Liberation_Sans',sans-serif] text-[12px] font-bold">?</text>
          <path d="M51.500 4.500H56.500V8.500H51.500ZM49.500 6.500H54.500V10.500H49.500Z" fill="none" stroke="#fff" />
          <path d="M50 17H56L53 20ZM68 18H75L71.500 14Z" fill="#fff" />
          <path d="M92.500 11.500H102.500V19.500H92.500ZM94 22H102M89 10V15H92M88 9V12M91 9V12" fill="none" stroke="#fff" strokeWidth="1.500" />
          <path d="M112.500 9V23M114 11H118L121 12H124V18H119L116 17H114Z" fill="#fff" stroke="#fff" />
          <circle cx="122" cy="19" r="4.500" fill="#e02c20" />
          <path d="M120 17L124 21M124 17L120 21" stroke="#fff" strokeWidth="1.500" />
          <path d="M137 13H140L145 9V23L140 19H137Z" fill="#fff" />
          <path d="M147 13Q149 16 147 19M149 11Q153 16 149 21" fill="none" stroke="#fff" />
        </svg>
        <div className={UI + " w-[74px] text-center text-[12px] leading-[18px] text-white"}>
          <div>16:38</div>
          <div>2020/8/21</div>
        </div>
      </div>
      <button aria-label="Show desktop" className="ml-0.5 mr-px w-[13px] border border-[#6c6474] bg-[linear-gradient(135deg,#8c8494_0%,#3c3448_50%,#241c30_100%)]" />
    </footer>
  );
}

export default function App() {
  return (
    <div className="flex h-screen w-full flex-col overflow-hidden bg-black text-black">
      <TitleBar />
      <MenuBar />
      <main className="relative flex min-h-0 flex-1">
        <LeftPanel />
        <div className="relative min-w-0 flex-1 bg-black">
          <Board />
          <Popview />
        </div>
        <RightPanel />
        <MeasurePopup />
      </main>
      <CommandBar />
      <StatusBar />
      <Taskbar />
    </div>
  );
}
